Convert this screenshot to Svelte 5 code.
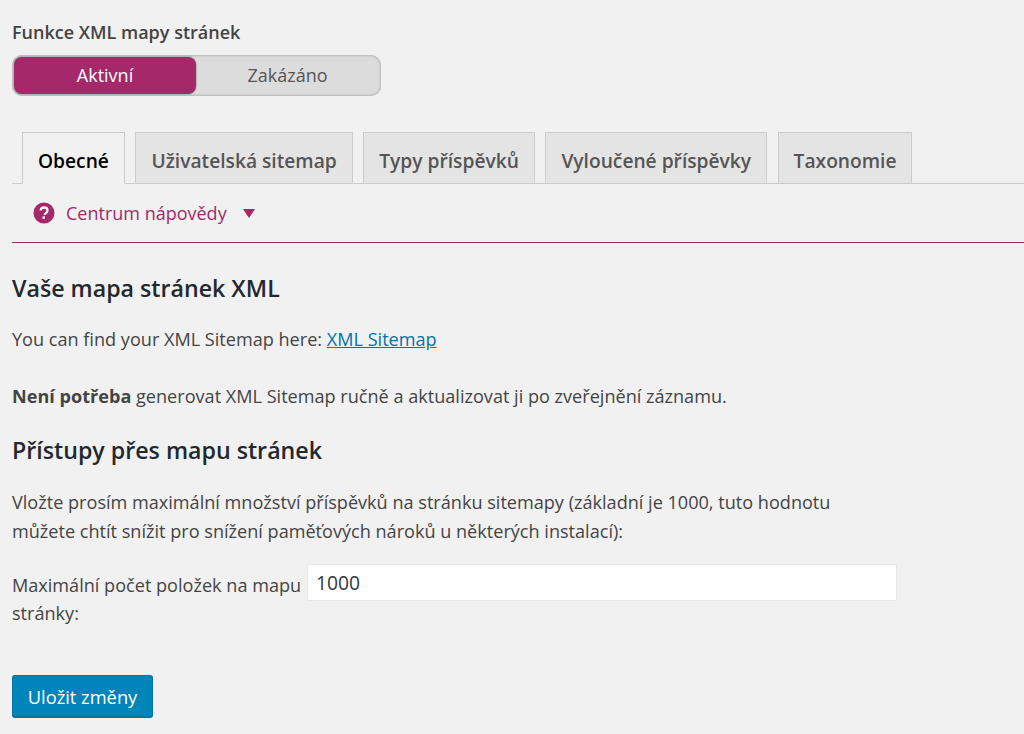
<script>
	const tabs = ['Obecné', 'Uživatelská sitemap', 'Typy příspěvků', 'Vyloučené příspěvky', 'Taxonomie'];
</script>

<div class="page">
	<h4 class="switch-title">Funkce XML mapy stránek</h4>
	<div class="switch">
		<span class="opt on">Aktivní</span>
		<span class="opt">Zakázáno</span>
	</div>

	<nav class="tabs">
		{#each tabs as tab, i}
			<a class="tab" class:active={i === 0} href="#top">{tab}</a>
		{/each}
	</nav>

	<div class="help">
		<svg width="22" height="22" viewBox="0 0 22 22" aria-hidden="true">
			<circle cx="11" cy="11" r="10.5" fill="#a4286a" />
			<path d="M7.6 8.5c.2-1.900 1.600-3 3.500-3 2 0 3.400 1.200 3.400 2.900 0 1.300-.7 2-1.700 2.700-.8.600-1.100 1-1.100 1.900" fill="none" stroke="#f1f1f1" stroke-width="2.300" />
			<rect x="9.500" y="14.300" width="2.500" height="2.500" fill="#f1f1f1" />
		</svg>
		<span class="help-text">Centrum nápovědy</span>
		<span class="caret"></span>
	</div>

	<h2 class="first">Vaše mapa stránek XML</h2>
	<p class="find">You can find your XML Sitemap here: <a href="#top">XML Sitemap</a></p>
	<p class="note"><strong>Není potřeba</strong> generovat XML Sitemap ručně a aktualizovat ji po zveřejnění záznamu.</p>

	<h2 class="second">Přístupy přes mapu stránek</h2>
	<p class="desc">Vložte prosím maximální množství příspěvků na stránku sitemapy (základní je 1000, tuto hodnotu můžete chtít snížit pro snížení paměťových nároků u některých instalací):</p>

	<div class="field">
		<label for="max">Maximální počet položek na mapu stránky:</label>
		<input id="max" type="text" value="1000" />
	</div>

	<button class="save" type="button">Uložit změny</button>
</div>

<style>
	:global(body) {
		background: #f1f1f1;
	}
	.page {
		height: 734px;
		box-sizing: border-box;
		overflow: hidden;
		padding: 21px 0 0 12px;
		font-family: "Open Sans", "Noto Sans", sans-serif;
		font-size: 18.100px;
		line-height: 29px;
		color: #444;
	}
	.switch-title {
		margin: 0;
		font-size: 18px;
		line-height: 22px;
		font-weight: 600;
		color: #444;
	}
	.switch {
		display: flex;
		width: 369px;
		height: 41px;
		box-sizing: border-box;
		margin-top: 12px;
		padding: 2px;
		border-radius: 10px;
		background: #dcdcdc;
		box-shadow: inset 0 0 3px rgba(0, 0, 0, 0.35);
	}
	.opt {
		flex: 1;
		text-align: center;
		line-height: 37px;
		font-size: 18px;
		color: #555;
	}
	.opt.on {
		flex: 0 0 182px;
		background: #a4286a;
		border-radius: 8px;
		color: #fff;
		box-shadow: 0 0 2px rgba(0, 0, 0, 0.5);
	}
	.tabs {
		display: flex;
		margin-top: 36px;
		padding-left: 10px;
		border-bottom: 1px solid #ccc;
		height: 51px;
	}
	.tab {
		box-sizing: border-box;
		height: 52px;
		margin-right: 10.500px;
		padding: 0 15px;
		border: 1px solid #ccc;
		background: #e4e4e4;
		font-size: 19.200px;
		font-weight: 600;
		line-height: 55px;
		color: #555;
		text-decoration: none;
		white-space: nowrap;
	}
	.tab.active {
		background: #f1f1f1;
		border-bottom-color: #f1f1f1;
		color: #000;
	}
	.help {
		display: flex;
		align-items: center;
		height: 59px;
		box-sizing: border-box;
		padding: 0 0 0 21px;
		border-bottom: 1px solid #a4286a;
		color: #a4286a;
	}
	.help-text {
		margin-left: 11px;
		padding-top: 1px;
		font-size: 18px;
	}
	.caret {
		width: 0;
		height: 0;
		margin-left: 16px;
		border-left: 6.500px solid transparent;
		border-right: 6.500px solid transparent;
		border-top: 9px solid #a4286a;
	}
	h2 {
		margin: 0;
		font-size: 23.200px;
		line-height: 30px;
		font-weight: 600;
		color: #23282d;
	}
	.first {
		margin-top: 30px;
	}
	p {
		margin: 0;
	}
	.find {
		margin-top: 22px;
	}
	.find a {
		color: #0073aa;
	}
	.note {
		margin-top: 28px;
	}
	.second {
		margin-top: 24px;
	}
	.desc {
		margin-top: 23px;
		width: 850px;
	}
	.field {
		display: flex;
		margin-top: 18px;
	}
	label {
		width: 295px;
		padding-top: 7px;
		line-height: 28px;
		flex: none;
	}
	input {
		width: 590px;
		height: 37px;
		box-sizing: border-box;
		padding: 0 8px;
		border: 1px solid #e8e8e8;
		background: #fff;
		font: inherit;
		font-size: 19.300px;
		color: #32373c;
	}
	.save {
		display: block;
		margin-top: 48px;
		width: 141px;
		height: 43px;
		border: 1px solid #0073aa;
		border-bottom-width: 2px;
		border-radius: 3px;
		background: #0085ba;
		font: inherit;
		font-size: 18.300px;
		color: #fff;
	}
</style>
